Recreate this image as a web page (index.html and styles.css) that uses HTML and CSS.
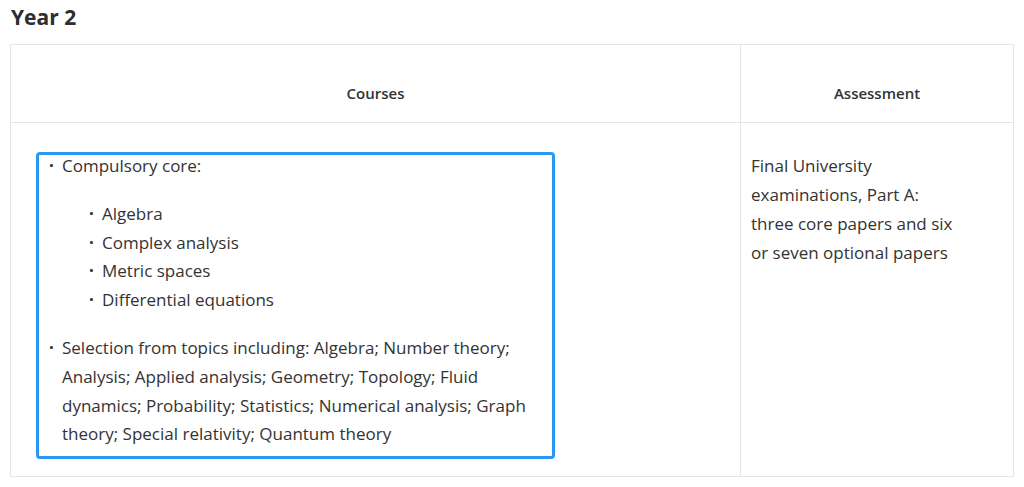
FILE: index.html
```html
<!DOCTYPE html>
<html>
<head>
<meta charset="utf-8">
<link rel="stylesheet" href="styles.css">
</head>
<body>
<h2 class="title">Year 2</h2>
<table class="grid">
  <thead>
    <tr>
      <th class="col-courses">Courses</th>
      <th class="col-assess">Assessment</th>
    </tr>
  </thead>
  <tbody>
    <tr>
      <td class="cell-courses">
        <div class="focus-box">
          <ul class="list">
            <li>Compulsory core:
              <ul class="sublist">
                <li>Algebra</li>
                <li>Complex analysis</li>
                <li>Metric spaces</li>
                <li>Differential equations</li>
              </ul>
            </li>
            <li>Selection from topics including: Algebra; Number theory; Analysis; Applied analysis; Geometry; Topology; Fluid dynamics; Probability; Statistics; Numerical analysis; Graph theory; Special relativity; Quantum theory</li>
          </ul>
        </div>
      </td>
      <td class="cell-assess">Final University examinations, Part A: three core papers and six or seven optional papers</td>
    </tr>
  </tbody>
</table>
</body>
</html>
```
FILE: styles.css
```css
html, body {
  margin: 0;
  padding: 0;
  background: #fff;
}
body {
  font-family: "Open Sans", "Noto Sans", sans-serif;
  color: #333;
  padding: 0 10px;
}
.title {
  margin: 0;
  padding-top: 3px;
  padding-left: 1px;
  font-size: 21px;
  line-height: 28px;
  font-weight: 700;
  color: #2e2e2e;
}
.grid {
  margin-top: 13px;
  width: 1004px;
  border-collapse: collapse;
}
.grid th, .grid td {
  border: 1px solid #e6e6e6;
}
.grid th {
  height: 77px;
  box-sizing: border-box;
  font-size: 15px;
  line-height: 20px;
  font-weight: 600;
  color: #333;
  text-align: center;
  vertical-align: top;
  padding: 38px 10px 19px;
}
.col-courses { width: 730px; }
.cell-courses {
  padding: 29px 185px 17px 25px;
  vertical-align: top;
}
.cell-assess {
  padding: 28px 48px 17px 10px;
  vertical-align: top;
  font-size: 17px;
  line-height: 29px;
}
.focus-box {
  border: 3px solid #2a98f2;
  border-radius: 4px;
  padding: 0 8px 7px 11px;
}
.list, .sublist {
  list-style: none;
  margin: 0;
  padding: 0;
  font-size: 17px;
  line-height: 28.7px;
}
.list {
  margin-top: -3px;
}
.list > li {
  position: relative;
  padding-left: 12px;
  margin-bottom: 19.3px;
}
.list > li:last-child { margin-bottom: 0; }
.sublist {
  margin: 19.3px 0 0 28px;
}
.sublist > li {
  position: relative;
  padding-left: 12px;
}
.list li::before {
  content: "·";
  position: absolute;
  left: -1px;
  top: 0;
  font-weight: 700;
}
```
